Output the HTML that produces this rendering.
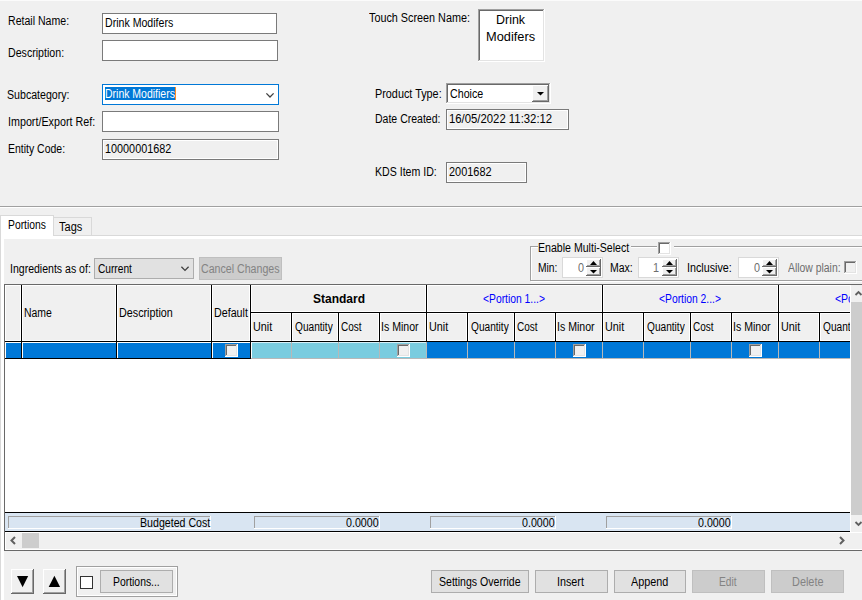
<!DOCTYPE html>
<html><head><meta charset="utf-8"><style>
html,body{margin:0;padding:0;width:862px;height:600px;overflow:hidden;background:#f0f0f0}
div,svg{position:absolute;box-sizing:border-box}
.t{font-family:"Liberation Sans",sans-serif;font-size:12px;line-height:14px;white-space:pre;transform-origin:0 0}
</style></head><body>
<div style='left:0px;top:0px;width:862px;height:600px;background:#f0f0f0;'></div>
<div style='left:0px;top:0px;width:862px;height:1px;background:#fbfbfb;'></div>
<div style='left:102px;top:13px;width:175px;height:21px;background:#fff;border:1px solid #7a7a7a;'></div>
<div style='left:102px;top:40px;width:176px;height:21px;background:#fff;border:1px solid #7a7a7a;'></div>
<div style='left:102px;top:84px;width:177px;height:21px;background:#fff;border:1px solid #0078d7;'></div>
<div style='left:105px;top:87px;width:70px;height:13px;background:#0078d7;'></div>
<div style='left:175px;top:87px;width:1px;height:13px;background:#ff8c20;'></div>
<svg style='left:264px;top:91px' width='12' height='8' viewBox='0 0 12 8'><polyline points='2.4,2.4 6,6 9.6,2.4' fill='none' stroke='#404040' stroke-width='1.3'/></svg>
<div style='left:102px;top:111px;width:177px;height:21px;background:#fff;border:1px solid #7a7a7a;'></div>
<div style='left:102px;top:139px;width:177px;height:21px;background:#f0f0f0;border:1px solid #7a7a7a;'></div>
<div style='left:103px;top:140px;width:175px;height:19px;border:1px solid #fff;'></div>
<div style='left:478px;top:9px;width:67px;height:53px;background:#fff;'></div>
<div style='left:478px;top:9px;width:66px;height:52px;background:#a0a0a0;'></div>
<div style='left:479px;top:10px;width:65px;height:51px;background:#e3e3e3;'></div>
<div style='left:479px;top:10px;width:64px;height:50px;background:#696969;'></div>
<div style='left:480px;top:11px;width:63px;height:49px;background:#fff;'></div>
<div style='left:446px;top:83px;width:105px;height:21px;background:#fff;'></div>
<div style='left:446px;top:83px;width:104px;height:20px;background:#a0a0a0;'></div>
<div style='left:447px;top:84px;width:103px;height:19px;background:#e3e3e3;'></div>
<div style='left:447px;top:84px;width:102px;height:18px;background:#696969;'></div>
<div style='left:448px;top:85px;width:101px;height:17px;background:#fff;'></div>
<div style='left:532px;top:85px;width:17px;height:17px;background:#696969;'></div>
<div style='left:532px;top:85px;width:16px;height:16px;background:#fff;'></div>
<div style='left:533px;top:86px;width:15px;height:15px;background:#a0a0a0;'></div>
<div style='left:533px;top:86px;width:14px;height:14px;background:#f0f0f0;'></div>
<svg style='left:536px;top:91px' width='9' height='6' viewBox='0 0 9 6'><polygon points='1,1 8,1 4.5,4.5' fill='#000'/></svg>
<div style='left:446px;top:109px;width:123px;height:21px;background:#f0f0f0;border:1px solid #7a7a7a;'></div>
<div style='left:447px;top:110px;width:121px;height:19px;border:1px solid #fff;'></div>
<div style='left:446px;top:162px;width:81px;height:21px;background:#f0f0f0;border:1px solid #7a7a7a;'></div>
<div style='left:447px;top:163px;width:79px;height:19px;border:1px solid #fff;'></div>
<div style='left:0px;top:206px;width:862px;height:1px;background:#a0a0a0;'></div>
<div style='left:0px;top:207px;width:862px;height:1px;background:#fff;'></div>
<div style='left:0px;top:235px;width:862px;height:365px;background:#d9d9d9;'></div>
<div style='left:1px;top:236px;width:861px;height:364px;background:#fff;'></div>
<div style='left:4px;top:239px;width:858px;height:361px;background:#f0f0f0;'></div>
<div style='left:53px;top:217px;width:39px;height:19px;background:#f0f0f0;border:1px solid #d9d9d9;'></div>
<div style='left:0px;top:215px;width:54px;height:21px;background:#d9d9d9;'></div>
<div style='left:1px;top:216px;width:52px;height:23px;background:#fff;'></div>
<div style='left:94px;top:258px;width:100px;height:21px;background:#e1e1e1;border:1px solid #adadad;'></div>
<svg style='left:179px;top:264px' width='12' height='8' viewBox='0 0 12 8'><polyline points='2.4,2.8 6,6.4 9.6,2.8' fill='none' stroke='#404040' stroke-width='1.3'/></svg>
<div style='left:199px;top:257px;width:83px;height:23px;background:#cccccc;border:1px solid #bfbfbf;'></div>
<div style='left:530px;top:246px;width:1px;height:35px;background:#a0a0a0;'></div>
<div style='left:531px;top:247px;width:1px;height:35px;background:#fff;'></div>
<div style='left:530px;top:280px;width:332px;height:1px;background:#a0a0a0;'></div>
<div style='left:531px;top:281px;width:331px;height:1px;background:#fff;'></div>
<div style='left:530px;top:246px;width:8px;height:1px;background:#a0a0a0;'></div>
<div style='left:531px;top:247px;width:7px;height:1px;background:#fff;'></div>
<div style='left:631px;top:246px;width:26px;height:1px;background:#a0a0a0;'></div>
<div style='left:631px;top:247px;width:26px;height:1px;background:#fff;'></div>
<div style='left:674px;top:246px;width:188px;height:1px;background:#a0a0a0;'></div>
<div style='left:674px;top:247px;width:188px;height:1px;background:#fff;'></div>
<div style='left:658px;top:242px;width:13px;height:13px;background:#fff;'></div>
<div style='left:658px;top:242px;width:12px;height:12px;background:#a0a0a0;'></div>
<div style='left:659px;top:243px;width:11px;height:11px;background:#e3e3e3;'></div>
<div style='left:659px;top:243px;width:10px;height:10px;background:#696969;'></div>
<div style='left:660px;top:244px;width:9px;height:9px;background:#fff;'></div>
<div style='left:562px;top:257px;width:41px;height:21px;background:#fff;border:1px solid #d9d9d9;'></div>
<div style='left:586px;top:259px;width:15px;height:8px;background:#696969;'></div>
<div style='left:586px;top:259px;width:14px;height:7px;background:#fff;'></div>
<div style='left:587px;top:260px;width:13px;height:6px;background:#a0a0a0;'></div>
<div style='left:587px;top:260px;width:12px;height:5px;background:#f0f0f0;'></div>
<div style='left:586px;top:267px;width:15px;height:9px;background:#696969;'></div>
<div style='left:586px;top:267px;width:14px;height:8px;background:#fff;'></div>
<div style='left:587px;top:268px;width:13px;height:7px;background:#a0a0a0;'></div>
<div style='left:587px;top:268px;width:12px;height:6px;background:#f0f0f0;'></div>
<svg style='left:589px;top:260px' width='9' height='6' viewBox='0 0 9 6'><polygon points='1,5 8,5 4.5,1' fill='#000'/></svg>
<svg style='left:589px;top:269px' width='9' height='6' viewBox='0 0 9 6'><polygon points='1,1 8,1 4.5,4.6' fill='#000'/></svg>
<div style='left:638px;top:257px;width:41px;height:21px;background:#fff;border:1px solid #d9d9d9;'></div>
<div style='left:662px;top:259px;width:15px;height:8px;background:#696969;'></div>
<div style='left:662px;top:259px;width:14px;height:7px;background:#fff;'></div>
<div style='left:663px;top:260px;width:13px;height:6px;background:#a0a0a0;'></div>
<div style='left:663px;top:260px;width:12px;height:5px;background:#f0f0f0;'></div>
<div style='left:662px;top:267px;width:15px;height:9px;background:#696969;'></div>
<div style='left:662px;top:267px;width:14px;height:8px;background:#fff;'></div>
<div style='left:663px;top:268px;width:13px;height:7px;background:#a0a0a0;'></div>
<div style='left:663px;top:268px;width:12px;height:6px;background:#f0f0f0;'></div>
<svg style='left:665px;top:260px' width='9' height='6' viewBox='0 0 9 6'><polygon points='1,5 8,5 4.5,1' fill='#000'/></svg>
<svg style='left:665px;top:269px' width='9' height='6' viewBox='0 0 9 6'><polygon points='1,1 8,1 4.5,4.6' fill='#000'/></svg>
<div style='left:738px;top:257px;width:41px;height:21px;background:#fff;border:1px solid #d9d9d9;'></div>
<div style='left:762px;top:259px;width:15px;height:8px;background:#696969;'></div>
<div style='left:762px;top:259px;width:14px;height:7px;background:#fff;'></div>
<div style='left:763px;top:260px;width:13px;height:6px;background:#a0a0a0;'></div>
<div style='left:763px;top:260px;width:12px;height:5px;background:#f0f0f0;'></div>
<div style='left:762px;top:267px;width:15px;height:9px;background:#696969;'></div>
<div style='left:762px;top:267px;width:14px;height:8px;background:#fff;'></div>
<div style='left:763px;top:268px;width:13px;height:7px;background:#a0a0a0;'></div>
<div style='left:763px;top:268px;width:12px;height:6px;background:#f0f0f0;'></div>
<svg style='left:765px;top:260px' width='9' height='6' viewBox='0 0 9 6'><polygon points='1,5 8,5 4.5,1' fill='#000'/></svg>
<svg style='left:765px;top:269px' width='9' height='6' viewBox='0 0 9 6'><polygon points='1,1 8,1 4.5,4.6' fill='#000'/></svg>
<div style='left:844px;top:261px;width:13px;height:13px;background:#fff;'></div>
<div style='left:844px;top:261px;width:12px;height:12px;background:#a0a0a0;'></div>
<div style='left:845px;top:262px;width:11px;height:11px;background:#e3e3e3;'></div>
<div style='left:845px;top:262px;width:10px;height:10px;background:#696969;'></div>
<div style='left:846px;top:263px;width:9px;height:9px;background:#f0f0f0;'></div>
<div style='left:4px;top:284px;width:858px;height:267px;background:#fff;border:1px solid #696969;'></div>
<div style='left:5px;top:285px;width:846px;height:57px;background:#000;'></div>
<div style='left:5px;top:285px;width:16px;height:56px;background:#f0f0f0;border:1px solid #fff;'></div>
<div style='left:22px;top:285px;width:94px;height:56px;background:#f0f0f0;border:1px solid #fff;'></div>
<div style='left:117px;top:285px;width:94px;height:56px;background:#f0f0f0;border:1px solid #fff;'></div>
<div style='left:212px;top:285px;width:38px;height:56px;background:#f0f0f0;border:1px solid #fff;'></div>
<div style='left:251px;top:285px;width:175px;height:27px;background:#f0f0f0;border:1px solid #fff;'></div>
<div style='left:251px;top:313px;width:40px;height:28px;background:#f0f0f0;border:1px solid #fff;'></div>
<div style='left:292px;top:313px;width:46px;height:28px;background:#f0f0f0;border:1px solid #fff;'></div>
<div style='left:339px;top:313px;width:40px;height:28px;background:#f0f0f0;border:1px solid #fff;'></div>
<div style='left:380px;top:313px;width:46px;height:28px;background:#f0f0f0;border:1px solid #fff;'></div>
<div style='left:427px;top:285px;width:175px;height:27px;background:#f0f0f0;border:1px solid #fff;'></div>
<div style='left:427px;top:313px;width:40px;height:28px;background:#f0f0f0;border:1px solid #fff;'></div>
<div style='left:468px;top:313px;width:46px;height:28px;background:#f0f0f0;border:1px solid #fff;'></div>
<div style='left:515px;top:313px;width:40px;height:28px;background:#f0f0f0;border:1px solid #fff;'></div>
<div style='left:556px;top:313px;width:46px;height:28px;background:#f0f0f0;border:1px solid #fff;'></div>
<div style='left:603px;top:285px;width:175px;height:27px;background:#f0f0f0;border:1px solid #fff;'></div>
<div style='left:603px;top:313px;width:40px;height:28px;background:#f0f0f0;border:1px solid #fff;'></div>
<div style='left:644px;top:313px;width:46px;height:28px;background:#f0f0f0;border:1px solid #fff;'></div>
<div style='left:691px;top:313px;width:40px;height:28px;background:#f0f0f0;border:1px solid #fff;'></div>
<div style='left:732px;top:313px;width:46px;height:28px;background:#f0f0f0;border:1px solid #fff;'></div>
<div style='left:779px;top:285px;width:175px;height:27px;background:#f0f0f0;border:1px solid #fff;'></div>
<div style='left:779px;top:313px;width:40px;height:28px;background:#f0f0f0;border:1px solid #fff;'></div>
<div style='left:820px;top:313px;width:46px;height:28px;background:#f0f0f0;border:1px solid #fff;'></div>
<div style='left:867px;top:313px;width:40px;height:28px;background:#f0f0f0;border:1px solid #fff;'></div>
<div style='left:908px;top:313px;width:46px;height:28px;background:#f0f0f0;border:1px solid #fff;'></div>
<div style='left:851px;top:285px;width:11px;height:247px;background:#f0f0f0;'></div>
<div style='left:5px;top:342px;width:246px;height:17px;background:#000;'></div>
<div style='left:5px;top:342px;width:16px;height:16px;background:#fff;'></div>
<div style='left:6px;top:343px;width:15px;height:15px;background:#0078d7;'></div>
<div style='left:22px;top:342px;width:94px;height:16px;background:#fff;'></div>
<div style='left:23px;top:343px;width:93px;height:15px;background:#0078d7;'></div>
<div style='left:117px;top:342px;width:94px;height:16px;background:#fff;'></div>
<div style='left:118px;top:343px;width:93px;height:15px;background:#0078d7;'></div>
<div style='left:212px;top:342px;width:38px;height:16px;background:#fff;'></div>
<div style='left:213px;top:343px;width:37px;height:15px;background:#0078d7;'></div>
<div style='left:251px;top:342px;width:176px;height:17px;background:#b8b8b8;'></div>
<div style='left:251px;top:342px;width:40px;height:16px;background:#7accdf;'></div>
<div style='left:292px;top:342px;width:46px;height:16px;background:#7accdf;'></div>
<div style='left:339px;top:342px;width:40px;height:16px;background:#7accdf;'></div>
<div style='left:380px;top:342px;width:46px;height:16px;background:#7accdf;'></div>
<div style='left:397px;top:344px;width:13px;height:13px;background:#fff;'></div>
<div style='left:397px;top:344px;width:12px;height:12px;background:#a0a0a0;'></div>
<div style='left:398px;top:345px;width:11px;height:11px;background:#e3e3e3;'></div>
<div style='left:398px;top:345px;width:10px;height:10px;background:#696969;'></div>
<div style='left:399px;top:346px;width:9px;height:9px;background:#f0f0f0;'></div>
<div style='left:427px;top:342px;width:176px;height:17px;background:#b8b8b8;'></div>
<div style='left:427px;top:342px;width:40px;height:16px;background:#0078d7;'></div>
<div style='left:468px;top:342px;width:46px;height:16px;background:#0078d7;'></div>
<div style='left:515px;top:342px;width:40px;height:16px;background:#0078d7;'></div>
<div style='left:556px;top:342px;width:46px;height:16px;background:#0078d7;'></div>
<div style='left:573px;top:344px;width:13px;height:13px;background:#fff;'></div>
<div style='left:573px;top:344px;width:12px;height:12px;background:#a0a0a0;'></div>
<div style='left:574px;top:345px;width:11px;height:11px;background:#e3e3e3;'></div>
<div style='left:574px;top:345px;width:10px;height:10px;background:#696969;'></div>
<div style='left:575px;top:346px;width:9px;height:9px;background:#f0f0f0;'></div>
<div style='left:603px;top:342px;width:176px;height:17px;background:#b8b8b8;'></div>
<div style='left:603px;top:342px;width:40px;height:16px;background:#0078d7;'></div>
<div style='left:644px;top:342px;width:46px;height:16px;background:#0078d7;'></div>
<div style='left:691px;top:342px;width:40px;height:16px;background:#0078d7;'></div>
<div style='left:732px;top:342px;width:46px;height:16px;background:#0078d7;'></div>
<div style='left:749px;top:344px;width:13px;height:13px;background:#fff;'></div>
<div style='left:749px;top:344px;width:12px;height:12px;background:#a0a0a0;'></div>
<div style='left:750px;top:345px;width:11px;height:11px;background:#e3e3e3;'></div>
<div style='left:750px;top:345px;width:10px;height:10px;background:#696969;'></div>
<div style='left:751px;top:346px;width:9px;height:9px;background:#f0f0f0;'></div>
<div style='left:779px;top:342px;width:176px;height:17px;background:#b8b8b8;'></div>
<div style='left:779px;top:342px;width:40px;height:16px;background:#0078d7;'></div>
<div style='left:820px;top:342px;width:46px;height:16px;background:#0078d7;'></div>
<div style='left:867px;top:342px;width:40px;height:16px;background:#0078d7;'></div>
<div style='left:908px;top:342px;width:46px;height:16px;background:#0078d7;'></div>
<div style='left:925px;top:344px;width:13px;height:13px;background:#fff;'></div>
<div style='left:925px;top:344px;width:12px;height:12px;background:#a0a0a0;'></div>
<div style='left:926px;top:345px;width:11px;height:11px;background:#e3e3e3;'></div>
<div style='left:926px;top:345px;width:10px;height:10px;background:#696969;'></div>
<div style='left:927px;top:346px;width:9px;height:9px;background:#f0f0f0;'></div>
<div style='left:225px;top:344px;width:13px;height:13px;background:#fff;'></div>
<div style='left:225px;top:344px;width:12px;height:12px;background:#a0a0a0;'></div>
<div style='left:226px;top:345px;width:11px;height:11px;background:#e3e3e3;'></div>
<div style='left:226px;top:345px;width:10px;height:10px;background:#696969;'></div>
<div style='left:227px;top:346px;width:9px;height:9px;background:#f0f0f0;'></div>
<div style='left:251px;top:342px;width:40px;height:1px;background:#d8f0f8;'></div>
<div style='left:292px;top:342px;width:46px;height:1px;background:#d8f0f8;'></div>
<div style='left:339px;top:342px;width:40px;height:1px;background:#d8f0f8;'></div>
<div style='left:380px;top:342px;width:46px;height:1px;background:#d8f0f8;'></div>
<div style='left:251px;top:342px;width:1px;height:16px;background:#fff;'></div>
<div style='left:851px;top:285px;width:11px;height:247px;background:#f0f0f0;'></div>
<div style='left:850px;top:285px;width:1px;height:247px;background:#fff;'></div>
<div style='left:5px;top:512px;width:845px;height:1px;background:#000;'></div>
<div style='left:5px;top:513px;width:845px;height:18px;background:#d9e5f2;'></div>
<div style='left:5px;top:531px;width:845px;height:1px;background:#000;'></div>
<div style='left:850px;top:285px;width:1px;height:247px;background:#fff;'></div>
<div style='left:8px;top:516px;width:203px;height:13px;background:#fff;'></div>
<div style='left:8px;top:516px;width:202px;height:12px;background:#a0a0a0;'></div>
<div style='left:9px;top:517px;width:201px;height:11px;background:#d9e5f2;'></div>
<div style='left:254px;top:516px;width:126px;height:13px;background:#fff;'></div>
<div style='left:254px;top:516px;width:125px;height:12px;background:#a0a0a0;'></div>
<div style='left:255px;top:517px;width:124px;height:11px;background:#d9e5f2;'></div>
<div style='left:430px;top:516px;width:126px;height:13px;background:#fff;'></div>
<div style='left:430px;top:516px;width:125px;height:12px;background:#a0a0a0;'></div>
<div style='left:431px;top:517px;width:124px;height:11px;background:#d9e5f2;'></div>
<div style='left:606px;top:516px;width:126px;height:13px;background:#fff;'></div>
<div style='left:606px;top:516px;width:125px;height:12px;background:#a0a0a0;'></div>
<div style='left:607px;top:517px;width:124px;height:11px;background:#d9e5f2;'></div>
<div style='left:5px;top:532px;width:857px;height:18px;background:#fff;'></div>
<div style='left:6px;top:533px;width:856px;height:16px;background:#f0f0f0;'></div>
<div style='left:22px;top:533px;width:17px;height:15px;background:#cdcdcd;'></div>
<svg style='left:8px;top:535px' width='10' height='11' viewBox='0 0 10 11'><polyline points='7,2 3.5,5.5 7,9' fill='none' stroke='#606060' stroke-width='2'/></svg>
<svg style='left:836px;top:535px' width='10' height='11' viewBox='0 0 10 11'><polyline points='4,2 7.5,5.5 4,9' fill='none' stroke='#606060' stroke-width='2'/></svg>
<div style='left:4px;top:550px;width:858px;height:1px;background:#696969;'></div>
<div style='left:851px;top:302px;width:11px;height:213px;background:#cdcdcd;'></div>
<svg style='left:853px;top:288px' width='10' height='10' viewBox='0 0 10 10'><polyline points='2.5,7 5.5,4 8.5,7' fill='none' stroke='#606060' stroke-width='1.8'/></svg>
<svg style='left:853px;top:519px' width='10' height='10' viewBox='0 0 10 10'><polyline points='2.5,3 5.5,6 8.5,3' fill='none' stroke='#606060' stroke-width='1.8'/></svg>
<div style='left:11px;top:569px;width:23px;height:25px;background:#696969;'></div>
<div style='left:11px;top:569px;width:22px;height:24px;background:#fff;'></div>
<div style='left:12px;top:570px;width:21px;height:23px;background:#a0a0a0;'></div>
<div style='left:12px;top:570px;width:20px;height:22px;background:#f0f0f0;'></div>
<svg style='left:17px;top:575px' width='12' height='13' viewBox='0 0 12 13'><polygon points='0,1 11.2,1 5.6,12.2' fill='#000'/></svg>
<div style='left:43px;top:569px;width:23px;height:25px;background:#696969;'></div>
<div style='left:43px;top:569px;width:22px;height:24px;background:#fff;'></div>
<div style='left:44px;top:570px;width:21px;height:23px;background:#a0a0a0;'></div>
<div style='left:44px;top:570px;width:20px;height:22px;background:#f0f0f0;'></div>
<svg style='left:48px;top:575px' width='13' height='13' viewBox='0 0 13 13'><polygon points='0.7,12 12.1,12 6.4,0.8' fill='#000'/></svg>
<div style='left:76px;top:566px;width:102px;height:31px;border:1px solid #a0a0a0;'></div>
<div style='left:77px;top:567px;width:100px;height:29px;border:1px solid #fff;'></div>
<div style='left:80px;top:576px;width:13px;height:13px;background:#fff;border:1px solid #333;'></div>
<div style='left:100px;top:570px;width:73px;height:23px;background:#e1e1e1;border:1px solid #adadad;'></div>
<div style='left:431px;top:570px;width:98px;height:23px;background:#e1e1e1;border:1px solid #adadad;'></div>
<div style='left:535px;top:570px;width:73px;height:23px;background:#e1e1e1;border:1px solid #adadad;'></div>
<div style='left:614px;top:570px;width:72px;height:23px;background:#e1e1e1;border:1px solid #adadad;'></div>
<div style='left:692px;top:570px;width:73px;height:23px;background:#cccccc;border:1px solid #bfbfbf;'></div>
<div style='left:771px;top:570px;width:73px;height:23px;background:#cccccc;border:1px solid #bfbfbf;'></div>
<div class='t' style='left:8.12px;top:14px;color:#000;transform:scaleX(0.8806);'>Retail Name:</div>
<div class='t' style='left:105.12px;top:16px;color:#000;transform:scaleX(0.8816);'>Drink Modifers</div>
<div class='t' style='left:8.11px;top:46px;color:#000;transform:scaleX(0.8852);'>Description:</div>
<div class='t' style='left:7.12px;top:88px;color:#000;transform:scaleX(0.8841);'>Subcategory:</div>
<div class='t' style='left:105.13px;top:87px;color:#fff;transform:scaleX(0.8734);'>Drink Modifiers</div>
<div class='t' style='left:8.11px;top:115px;color:#000;transform:scaleX(0.8947);'>Import/Export Ref:</div>
<div class='t' style='left:8.13px;top:142px;color:#000;transform:scaleX(0.8730);'>Entity Code:</div>
<div class='t' style='left:105.10px;top:142px;color:#000;transform:scaleX(0.9028);'>10000001682</div>
<div class='t' style='left:369.00px;top:11px;color:#000;transform:scaleX(0.9009);'>Touch Screen Name:</div>
<div class='t' style='left:495.96px;top:13px;color:#000;transform:scaleX(1.0370);'>Drink</div>
<div class='t' style='left:485.93px;top:30px;color:#000;transform:scaleX(1.0667);'>Modifers</div>
<div class='t' style='left:375.10px;top:87px;color:#000;transform:scaleX(0.9028);'>Product Type:</div>
<div class='t' style='left:450.11px;top:87px;color:#000;transform:scaleX(0.8889);'>Choice</div>
<div class='t' style='left:375.12px;top:112px;color:#000;transform:scaleX(0.8767);'>Date Created:</div>
<div class='t' style='left:449.06px;top:112px;color:#000;transform:scaleX(0.9444);'>16/05/2022 11:32:12</div>
<div class='t' style='left:375.12px;top:165px;color:#000;transform:scaleX(0.8824);'>KDS Item ID:</div>
<div class='t' style='left:449.09px;top:165px;color:#000;transform:scaleX(0.9111);'>2001682</div>
<div class='t' style='left:59.00px;top:220px;color:#000;transform:scaleX(0.9200);'>Tags</div>
<div class='t' style='left:8.14px;top:218px;color:#000;transform:scaleX(0.8605);'>Portions</div>
<div class='t' style='left:10.12px;top:262px;color:#000;transform:scaleX(0.8778);'>Ingredients as of:</div>
<div class='t' style='left:98.15px;top:262px;color:#000;transform:scaleX(0.8462);'>Current</div>
<div class='t' style='left:201.11px;top:262px;color:#838383;transform:scaleX(0.8851);'>Cancel Changes</div>
<div class='t' style='left:538.12px;top:241px;color:#000;transform:scaleX(0.8824);'>Enable Multi-Select</div>
<div class='t' style='left:538.14px;top:261px;color:#000;transform:scaleX(0.8571);'>Min:</div>
<div class='t' style='left:577.80px;top:261px;color:#6d6d6d;transform:scaleX(0.9000);'>0</div>
<div class='t' style='left:610.12px;top:261px;color:#000;transform:scaleX(0.8750);'>Max:</div>
<div class='t' style='left:653.35px;top:261px;color:#6d6d6d;transform:scaleX(0.9000);'>1</div>
<div class='t' style='left:687.10px;top:261px;color:#000;transform:scaleX(0.8958);'>Inclusive:</div>
<div class='t' style='left:753.80px;top:261px;color:#6d6d6d;transform:scaleX(0.9000);'>0</div>
<div class='t' style='left:788.00px;top:261px;color:#6d6d6d;transform:scaleX(0.8667);'>Allow plain:</div>
<div style='left:5px;top:285px;width:845px;height:57px;overflow:hidden'><div class='t' style='left:19.13px;top:21px;color:#000;transform:scaleX(0.8710);'>Name</div></div>
<div style='left:5px;top:285px;width:845px;height:57px;overflow:hidden'><div class='t' style='left:114.10px;top:21px;color:#000;transform:scaleX(0.8966);'>Description</div></div>
<div style='left:5px;top:285px;width:845px;height:57px;overflow:hidden'><div class='t' style='left:209.11px;top:21px;color:#000;transform:scaleX(0.8919);'>Default</div></div>
<div style='left:5px;top:285px;width:845px;height:57px;overflow:hidden'><div class='t' style='left:308.00px;top:7px;color:#000;transform:scaleX(1.0000);font-weight:bold;'>Standard</div></div>
<div style='left:5px;top:285px;width:845px;height:57px;overflow:hidden'><div class='t' style='left:478.14px;top:7px;color:#0000ff;transform:scaleX(0.8592);'>&lt;Portion 1...&gt;</div></div>
<div style='left:5px;top:285px;width:845px;height:57px;overflow:hidden'><div class='t' style='left:654.14px;top:7px;color:#0000ff;transform:scaleX(0.8592);'>&lt;Portion 2...&gt;</div></div>
<div style='left:5px;top:285px;width:845px;height:57px;overflow:hidden'><div class='t' style='left:248.10px;top:35px;color:#000;transform:scaleX(0.9000);'>Unit</div></div>
<div style='left:5px;top:285px;width:845px;height:57px;overflow:hidden'><div class='t' style='left:290.00px;top:35px;color:#000;transform:scaleX(0.8444);'>Quantity</div></div>
<div style='left:5px;top:285px;width:845px;height:57px;overflow:hidden'><div class='t' style='left:336.17px;top:35px;color:#000;transform:scaleX(0.8333);'>Cost</div></div>
<div style='left:5px;top:285px;width:845px;height:57px;overflow:hidden'><div class='t' style='left:376.12px;top:35px;color:#000;transform:scaleX(0.8810);'>Is Minor</div></div>
<div style='left:5px;top:285px;width:845px;height:57px;overflow:hidden'><div class='t' style='left:424.10px;top:35px;color:#000;transform:scaleX(0.9000);'>Unit</div></div>
<div style='left:5px;top:285px;width:845px;height:57px;overflow:hidden'><div class='t' style='left:466.00px;top:35px;color:#000;transform:scaleX(0.8444);'>Quantity</div></div>
<div style='left:5px;top:285px;width:845px;height:57px;overflow:hidden'><div class='t' style='left:512.17px;top:35px;color:#000;transform:scaleX(0.8333);'>Cost</div></div>
<div style='left:5px;top:285px;width:845px;height:57px;overflow:hidden'><div class='t' style='left:552.12px;top:35px;color:#000;transform:scaleX(0.8810);'>Is Minor</div></div>
<div style='left:5px;top:285px;width:845px;height:57px;overflow:hidden'><div class='t' style='left:600.10px;top:35px;color:#000;transform:scaleX(0.9000);'>Unit</div></div>
<div style='left:5px;top:285px;width:845px;height:57px;overflow:hidden'><div class='t' style='left:642.00px;top:35px;color:#000;transform:scaleX(0.8444);'>Quantity</div></div>
<div style='left:5px;top:285px;width:845px;height:57px;overflow:hidden'><div class='t' style='left:688.17px;top:35px;color:#000;transform:scaleX(0.8333);'>Cost</div></div>
<div style='left:5px;top:285px;width:845px;height:57px;overflow:hidden'><div class='t' style='left:728.12px;top:35px;color:#000;transform:scaleX(0.8810);'>Is Minor</div></div>
<div style='left:5px;top:285px;width:845px;height:57px;overflow:hidden'><div class='t' style='left:776.10px;top:35px;color:#000;transform:scaleX(0.9000);'>Unit</div></div>
<div style='left:5px;top:285px;width:845px;height:57px;overflow:hidden'><div class='t' style='left:818.00px;top:35px;color:#000;transform:scaleX(0.8444);'>Quantity</div></div>
<div style='left:5px;top:285px;width:845px;height:57px;overflow:hidden'><div class='t' style='left:830.13px;top:7px;color:#0000ff;transform:scaleX(0.8732);'>&lt;Portion 3...&gt;</div></div>
<div class='t' style='left:140.12px;top:516px;color:#000;transform:scaleX(0.8846);'>Budgeted Cost</div>
<div class='t' style='left:346.00px;top:516px;color:#000;transform:scaleX(0.8889);'>0.0000</div>
<div class='t' style='left:522.00px;top:516px;color:#000;transform:scaleX(0.8889);'>0.0000</div>
<div class='t' style='left:698.00px;top:516px;color:#000;transform:scaleX(0.8889);'>0.0000</div>
<div class='t' style='left:113.13px;top:575px;color:#000;transform:scaleX(0.8654);'>Portions...</div>
<div class='t' style='left:439.12px;top:575px;color:#000;transform:scaleX(0.8791);'>Settings Override</div>
<div class='t' style='left:557.10px;top:575px;color:#000;transform:scaleX(0.8966);'>Insert</div>
<div class='t' style='left:631.00px;top:575px;color:#000;transform:scaleX(0.9024);'>Append</div>
<div class='t' style='left:719.15px;top:575px;color:#838383;transform:scaleX(0.8500);'>Edit</div>
<div class='t' style='left:792.09px;top:575px;color:#838383;transform:scaleX(0.9091);'>Delete</div>
</body></html>
